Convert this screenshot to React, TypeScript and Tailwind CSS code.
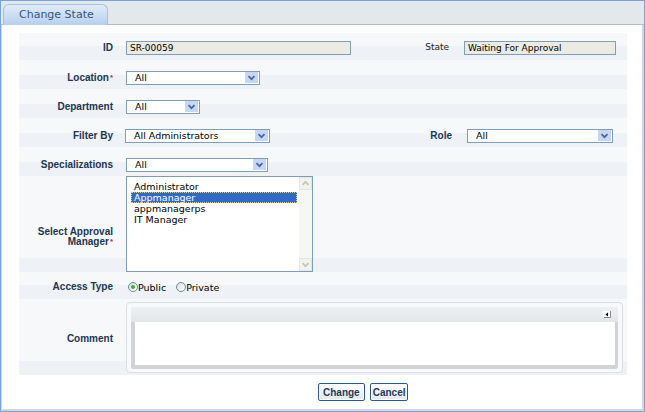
import React from 'react';

const labelCls =
  "font-['Liberation_Sans',Arial,sans-serif] font-bold text-[10px] leading-[10px] text-[#1c3652] text-right";

const Req = () => <span className="text-[#d01818] text-[8px] align-top ml-[1px]">*</span>;

const Chevron = ({ color = '#4a659b' }: { color?: string }) => (
  <svg width="9" height="6" viewBox="0 0 9 6">
    <path d="M1.5 1.2 L4.5 4.2 L7.5 1.2" fill="none" stroke={color} strokeWidth="1.7" />
  </svg>
);

const Select = ({ className, value }: { className: string; value: string }) => (
  <div className={`h-[14px] border border-[#7f9db9] bg-white flex items-center justify-between ${className}`}>
    <span className="pl-[8px] text-[9.5px] leading-none text-black">{value}</span>
    <span className="h-[11px] w-[13px] mr-[1px] bg-[#c6d6f5] flex items-center justify-center">
      <Chevron />
    </span>
  </div>
);

const Radio = ({ checked }: { checked?: boolean }) => (
  <span className="w-[10px] h-[10px] rounded-full border border-[#6f88a6] bg-[linear-gradient(135deg,#dcdcd6,#ffffff)] flex items-center justify-center">
    {checked && <span className="w-[4px] h-[4px] rounded-full bg-[#37b037]" />}
  </span>
);

const rowBg = 'bg-[linear-gradient(to_top,#eef1f5_14px,#f7f8fa_14px)]';

export default function App() {
  return (
    <div className="w-[645px] h-[412px] border border-[#7aa3da] bg-white flex flex-col font-['DejaVu_Sans',Verdana,sans-serif] text-black overflow-hidden">
      {/* tab bar */}
      <div className="h-[24px] shrink-0 bg-[#e3e8ec] border-b border-[#b6c0ae] flex items-end pl-[2px]">
        <div className="h-[21px] w-[105px] -mb-[1px] rounded-t-[6px] border border-b-0 border-[#a9c1df] bg-[linear-gradient(#e2ecf8,#b6cfee)] pl-[15px] pt-[2px] text-[11px] text-[#33577c]">
          Change State
        </div>
      </div>

      {/* content */}
      <div className="flex-1 flex flex-col border-r-2 border-b-2 border-l border-[#d3d7db]">
        <div className="mt-[8px] ml-[17px] w-[608px] flex flex-col">
          {/* ID / State */}
          <div className={`h-[27px] pt-[3px] flex items-center ${rowBg}`}>
            <div className={`w-[94px] ${labelCls}`}>ID</div>
            <div className="ml-[13px] w-[225px] h-[14px] border border-[#7f9db9] bg-[#ebebe4] pl-[3px] text-[9px] leading-[12px]">
              SR-00059
            </div>
            <div className="w-[98px] text-right text-[9px] text-[#1a1a1a]">State</div>
            <div className="ml-[15px] w-[152px] h-[14px] border border-[#7f9db9] bg-[#ebebe4] pl-[3px] text-[9px] leading-[12px]">
              Waiting For Approval
            </div>
          </div>

          {/* Location */}
          <div className={`h-[29px] pt-[6px] flex items-center ${rowBg}`}>
            <div className={`w-[94px] ${labelCls}`}>
              Location<Req />
            </div>
            <Select className="ml-[13px] w-[134px]" value="All" />
          </div>

          {/* Department */}
          <div className={`h-[29px] pt-[6px] flex items-center ${rowBg}`}>
            <div className={`w-[94px] ${labelCls}`}>Department</div>
            <Select className="ml-[13px] w-[74px]" value="All" />
          </div>

          {/* Filter By / Role */}
          <div className={`h-[29px] pt-[6px] flex items-center ${rowBg}`}>
            <div className={`w-[94px] ${labelCls}`}>Filter By</div>
            <Select className="ml-[12px] w-[145px]" value="All Administrators" />
            <div className={`w-[182px] ${labelCls}`}>Role</div>
            <Select className="ml-[15px] w-[146px]" value="All" />
          </div>

          {/* Specializations */}
          <div className={`h-[29px] pt-[6px] flex items-center ${rowBg}`}>
            <div className={`w-[94px] ${labelCls}`}>Specializations</div>
            <Select className="ml-[13px] w-[142px]" value="All" />
          </div>

          {/* Approval manager */}
          <div className={`h-[96px] flex ${rowBg}`}>
            <div className={`w-[94px] self-center pt-[26px] ${labelCls}`}>
              Select Approval
              <br />
              Manager<Req />
            </div>
            <div className="ml-[13px] w-[187px] h-[96px] border border-[#7f9db9] bg-white flex">
              <div className="flex-1 pt-[4px] pl-[4px] pr-[2px] text-[9.5px] leading-[11px]">
                <div className="pl-[3px]">Administrator</div>
                <div className="pl-[2px] bg-[#316ac5] text-white border border-dotted border-[#d9cf8c] leading-[9px] h-[11px]">
                  Appmanager
                </div>
                <div className="pl-[3px]">appmanagerps</div>
                <div className="pl-[3px]">IT Manager</div>
              </div>
              <div className="w-[13px] bg-[#f6f6f2] flex flex-col justify-between">
                <span className="h-[13px] border border-[#e6e5dc] bg-[#f3f3ee] flex items-center justify-center rotate-180">
                  <Chevron color="#c4c4bc" />
                </span>
                <span className="h-[13px] border border-[#e6e5dc] bg-[#f3f3ee] flex items-center justify-center">
                  <Chevron color="#c4c4bc" />
                </span>
              </div>
            </div>
          </div>

          {/* Access type */}
          <div className={`h-[27px] pt-[3px] flex items-center ${rowBg}`}>
            <div className={`w-[94px] ${labelCls}`}>Access Type</div>
            <div className="ml-[15px] flex items-center text-[9.5px] leading-none">
              <Radio checked />
              <span className="mt-[2px]">Public</span>
              <span className="ml-[10px]">
                <Radio />
              </span>
              <span className="mt-[2px]">Private</span>
            </div>
          </div>

          {/* Comment */}
          <div className={`h-[76px] flex ${rowBg}`}>
            <div className={`w-[94px] self-center pt-[4px] ${labelCls}`}>Comment</div>
            <div className="ml-[13px] mt-[3px] w-[497px] h-[71px] rounded-[4px] border border-[#dadee3] bg-[#f8f9fa] px-[4px] pt-[4px] flex flex-col">
              <div className="h-[15px] bg-[linear-gradient(#eef0f2,#e3e6e9)] flex items-center justify-end pr-[7px]">
                <svg width="8" height="7" viewBox="0 0 8 7">
                  <rect x="0.5" y="0.5" width="6" height="6" fill="#f4f4f4" stroke="#ffffff" />
                  <path d="M1 6.5 H7.5 V0" fill="none" stroke="#8a8a8a" />
                  <path d="M5 1.5 L2.5 3.5 L5 5.5 Z" fill="#000" />
                </svg>
              </div>
              <div className="h-[47px] bg-white border-l-4 border-r-[3px] border-b-4 border-[#d2d3d4] rounded-b-[3px]" />
            </div>
          </div>
        </div>

        {/* buttons */}
        <div className="pt-[8px] pl-[316px] flex gap-[5px]">
          <button className="h-[18px] px-[4px] border border-[#2b5a8d] rounded-[2px] shadow-[inset_0_0_0_1px_#ffffff] bg-[linear-gradient(#ffffff,#e3e8ee)] font-['Liberation_Sans',Arial,sans-serif] font-bold text-[10px] text-[#1f3a57]">
            Change
          </button>
          <button className="h-[18px] px-[2px] border border-[#2b5a8d] rounded-[2px] shadow-[inset_0_0_0_1px_#ffffff] bg-[linear-gradient(#ffffff,#e3e8ee)] font-['Liberation_Sans',Arial,sans-serif] font-bold text-[10px] text-[#1f3a57]">
            Cancel
          </button>
        </div>
      </div>
    </div>
  );
}
